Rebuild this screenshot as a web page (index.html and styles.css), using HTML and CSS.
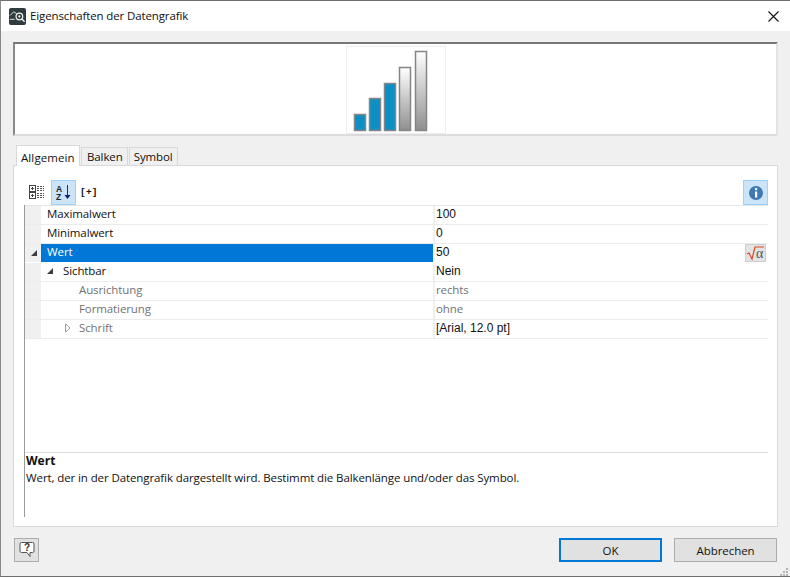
FILE: index.html
```html
<!DOCTYPE html>
<html lang="de">
<head>
<meta charset="utf-8">
<title>Eigenschaften der Datengrafik</title>
<link rel="stylesheet" href="styles.css">
</head>
<body>
<div class="window">
  <header class="titlebar">
    <svg class="app-icon" width="17" height="17" viewBox="0 0 18 18">
      <rect width="18" height="18" rx="2" fill="#2f3b3f"/>
      <path d="M1 8l4-4 3 2" fill="none" stroke="#e8e8e8" stroke-width="1"/>
      <path d="M1 12h5" fill="none" stroke="#e8e8e8" stroke-width="1"/>
      <circle cx="11" cy="9" r="3.500" fill="none" stroke="#f2f2f2" stroke-width="1.300"/>
      <circle cx="11" cy="9" r="1.200" fill="#f2f2f2"/>
      <path d="M13.500 11.500l3 3" stroke="#f2f2f2" stroke-width="1.500"/>
    </svg>
    <span class="title">Eigenschaften der Datengrafik</span>
    <svg class="close" width="11" height="11" viewBox="0 0 11 11"><path d="M.5.5l10 10M10.500.5l-10 10" stroke="#111" stroke-width="1.100" fill="none"/></svg>
  </header>
  <main class="content">
    <section class="preview">
      <svg class="chart" width="100" height="88" viewBox="0 0 100 88">
        <defs>
          <linearGradient id="g" x1="0" y1="0" x2="0" y2="1"><stop offset="0" stop-color="#ffffff"/><stop offset="1" stop-color="#8f8f8f"/></linearGradient>
        </defs>
        <rect x=".5" y=".5" width="99" height="87" fill="#fff" stroke="#eeeeee"/>
        <rect x="8.500" y="68.500" width="11" height="16" fill="#0b8fc4" stroke="#858585" stroke-width="1.500"/>
        <rect x="23.500" y="52.500" width="11" height="32" fill="#0b8fc4" stroke="#858585" stroke-width="1.500"/>
        <rect x="38.500" y="37.500" width="11" height="47" fill="#0b8fc4" stroke="#858585" stroke-width="1.500"/>
        <rect x="53.500" y="21.500" width="11" height="63" fill="url(#g)" stroke="#858585" stroke-width="1.500"/>
        <rect x="69.500" y="5.500" width="11" height="79" fill="url(#g)" stroke="#858585" stroke-width="1.500"/>
      </svg>
    </section>
    <nav class="tabs">
      <span class="tab active">Allgemein</span>
      <span class="tab">Balken</span>
      <span class="tab last">Symbol</span>
    </nav>
    <section class="panel">
      <div class="toolbar">
        <button class="tool">
          <svg class="list-icon" width="15" height="15" viewBox="0 0 15 15" fill="none" stroke="#444"><rect x=".5" y=".5" width="6" height="6"/><rect x=".5" y="7.500" width="6" height="6"/><path d="M2 3.500h3M3.500 2v3M2 10.500h3M3.500 9v3"/><path d="M8 1.500h7M8 3.500h7M8 5.500h7M8 8.500h7M8 10.500h7M8 12.500h7" stroke="#555" stroke-dasharray="2 1"/></svg>
        </button>
        <button class="tool selected">
          <svg width="16" height="18" viewBox="0 0 16 18" fill="none"><text x="0" y="8" class="az">A</text><text x="0" y="16" class="az">Z</text><path d="M11.500 1v12" stroke="#1c2f80" stroke-width="1"/><path d="M8.500 11h6l-3 4z" fill="#10207a"/></svg>
        </button>
        <span class="expand">[+]</span>
        <button class="tool selected info">
          <svg width="16" height="16" viewBox="0 0 16 16"><circle cx="8" cy="8" r="7" fill="#3f78b4"/><rect x="7" y="3" width="2.200" height="2.200" fill="#fff"/><rect x="7" y="6.500" width="2.200" height="6" fill="#fff"/></svg>
        </button>
      </div>
      <div class="body">
        <div class="grid">
          <div class="row"><div class="gutter"></div><div class="name">Maximalwert</div><div class="value">100</div></div>
          <div class="row"><div class="gutter"></div><div class="name">Minimalwert</div><div class="value">0</div></div>
          <div class="row current"><div class="gutter"><i class="tri filled"></i></div><div class="name">Wert</div><div class="value">50<span class="formula"><svg width="19" height="16" viewBox="0 0 19 16" fill="none"><path d="M1 9l2-1 3 6 3-12h9" stroke="#d9482b" stroke-width="1.200"/><text x="10" y="13" class="alpha">α</text></svg></span></div></div>
          <div class="row"><div class="gutter"></div><div class="name indent1"><i class="tri filled"></i>Sichtbar</div><div class="value">Nein</div></div>
          <div class="row muted"><div class="gutter"></div><div class="name indent2">Ausrichtung</div><div class="value">rechts</div></div>
          <div class="row muted"><div class="gutter"></div><div class="name indent2">Formatierung</div><div class="value">ohne</div></div>
          <div class="row muted"><div class="gutter"></div><div class="name indent2"><svg class="tri-open" width="6" height="10" viewBox="0 0 6 10"><path d="M.5.800l4.500 4.200-4.500 4.200z" fill="#fff" stroke="#9a9a9a"/></svg>Schrift</div><div class="value dark">[Arial, 12.0 pt]</div></div>
        </div>
        <div class="description">
          <strong>Wert</strong>
          <p>Wert, der in der Datengrafik dargestellt wird. Bestimmt die Balkenlänge und/oder das Symbol.</p>
        </div>
      </div>
    </section>
    <footer class="footer">
      <button class="help">
        <svg width="16" height="18" viewBox="0 0 16 18" fill="#fff" stroke="#555"><path d="M2.500 1.500h11a1.500 1.500 0 0 1 1.500 1.500v7a1.500 1.500 0 0 1-1.500 1.500h-2.500v4l-3-4h-5.500a1.500 1.500 0 0 1-1.500-1.500v-7a1.500 1.500 0 0 1 1.500-1.500z"/><text x="8" y="10" class="q">?</text></svg>
      </button>
      <div class="actions">
        <button class="btn default">OK</button>
        <button class="btn">Abbrechen</button>
      </div>
    </footer>
  </main>
  <svg class="grip" width="9" height="8" viewBox="0 0 9 8" fill="#b5b5b5"><rect x="6" y="0" width="2" height="2"/><rect x="3" y="3" width="2" height="2"/><rect x="6" y="3" width="2" height="2"/><rect x="0" y="6" width="2" height="2"/><rect x="3" y="6" width="2" height="2"/><rect x="6" y="6" width="2" height="2"/></svg>
</div>
</body>
</html>
```
FILE: styles.css
```css
* { box-sizing: border-box; }
html, body { margin: 0; padding: 0; background: #fff; }
body { width: 790px; height: 578px; overflow: hidden; font-family: "Open Sans", "Noto Sans", sans-serif; font-size: 11.5px; color: #111; }
button { font: inherit; padding: 0; margin: 0; color: inherit; }

.window { position: relative; width: 790px; height: 577px; display: flex; flex-direction: column; border-top: 1px solid #6f6f6f; border-left: 1px solid #8a8a8a; border-bottom: 1px solid #6f6f6f; background: #f0f0f0; }
.titlebar { height: 30px; flex: none; background: #fff; display: flex; align-items: center; padding: 0 11px 0 8px; }
.app-icon { flex: none; }
.title { margin-left: 4px; flex: 1; letter-spacing: -.12px; padding-bottom: 2px; }
.close { flex: none; }

.content { flex: 1; min-height: 0; display: flex; flex-direction: column; padding: 11px 12px 0 12px; }

.preview { height: 94px; flex: none; background: #fff; border: 2px solid #a5a5a5; border-top-color: #777; border-left-color: #8a8a8a; border-right-color: #e3e3e3; border-bottom-color: #dcdcdc; display: flex; justify-content: center; padding-top: 2px; }
.chart { display: block; }

.tabs { display: flex; height: 20px; flex: none; margin-top: 9px; padding-left: 3px; align-items: flex-end; position: relative; z-index: 1; }
.tab { height: 18px; padding: 0 4px 0 5px; margin-right: 1px; border: 1px solid #d9d9d9; border-bottom: 0; background: #f0f0f0; display: flex; align-items: center; letter-spacing: -.1px; }
.tab.last { padding-left: 4px; }
.tab.active { height: 21px; width: 64px; padding: 2px 4px 0; background: #fff; margin-bottom: -1px; margin-right: 1px; letter-spacing: .1px; }

.panel { height: 362px; flex: none; background: #fff; border: 1px solid #d9d9d9; display: flex; flex-direction: column; padding: 14px 9px 9px 10px; }
.toolbar { height: 25px; flex: none; display: flex; align-items: center; padding-left: 3px; }
.tool { width: 25px; height: 25px; flex: none; border: 1px solid transparent; background: transparent; display: flex; align-items: center; justify-content: center; margin-right: -1px; }
.tool:first-child { margin-left: -1px; width: 21px; margin-right: 4px; }
.list-icon { flex: none; }
.tool.selected { background: #cce4f7; border-color: #99d1ff; }
.az { font-family: "Liberation Sans", sans-serif; font-size: 8.5px; font-weight: bold; fill: #222; }
.expand { font-family: "Liberation Mono", monospace; font-size: 9.5px; font-weight: bold; margin-left: 5px; letter-spacing: .2px; }
.info { margin-left: auto; margin-right: 0; }

.body { flex: 1; min-height: 0; border-left: 1px solid #9a9a9a; display: flex; flex-direction: column; }
.grid { height: 247px; flex: none; border-top: 1px solid #e6e6e6; }
.row { height: 19px; display: flex; border-bottom: 1px solid #ececec; line-height: 17px; }
.gutter { width: 16px; flex: none; background: #f0f0f0; display: flex; align-items: center; justify-content: center; padding-left: 2px; }
.name { width: 392px; flex: none; padding-left: 6px; padding-bottom: 3px; line-height: 15px; letter-spacing: -.1px; display: flex; align-items: center; }
.value { flex: 1; border-left: 2px solid #f0f0f0; padding-left: 1px; position: relative; font-family: "Liberation Sans", sans-serif; font-size: 12px; letter-spacing: 0; }
.current { border-bottom-color: #fff; }
.current .name { background: #0078d7; color: #fff; }
.indent1 { padding-left: 6px; }
.indent1 .tri { margin-right: 10px; }
.indent2 { padding-left: 38px; }
.muted .name, .muted .value { color: #737373; }
.muted .value { font-family: "Open Sans", sans-serif; font-size: 11.5px; letter-spacing: -.1px; line-height: 16px; }
.muted .value.dark { color: #111; font-family: "Liberation Sans", sans-serif; font-size: 12px; letter-spacing: 0; line-height: 17px; }
.formula { position: absolute; top: 0; right: 2px; width: 21px; height: 18px; background: #e3e3e3; border: 1px solid #cfcfcf; display: flex; align-items: center; justify-content: center; }
.alpha { font-family: "Liberation Serif", serif; font-size: 14px; fill: #555; }

.tri { display: block; width: 0; height: 0; flex: none; }
.tri.filled { border-left: 6px solid transparent; border-bottom: 6px solid #3c3c3c; }
.tri-open { flex: none; margin-left: -14px; margin-right: 8px; }

.description { border-top: 1px solid #dcdcdc; padding: 0 0 0 1px; line-height: 17px; }
.description strong { display: block; font-weight: 700; font-size: 12px; line-height: 16px; }
.description p { margin: 0; letter-spacing: -.1px; }

.footer { flex: 1; display: flex; align-items: center; justify-content: space-between; padding: 0 0 3px 1px; }
.help { width: 25px; height: 24px; background: #e1e1e1; border: 1px solid #adadad; display: flex; align-items: center; justify-content: center; }
.q { font-family: "Liberation Sans", sans-serif; font-size: 10px; font-weight: bold; text-anchor: middle; fill: #333; stroke: none; }
.actions { display: flex; gap: 12px; margin-right: 1px; }
.btn { width: 103px; height: 24px; background: #e1e1e1; border: 1px solid #adadad; letter-spacing: -.05px; }
.btn.default { border: 2px solid #0078d7; }
.grip { position: absolute; right: 1px; bottom: 0; }
```
